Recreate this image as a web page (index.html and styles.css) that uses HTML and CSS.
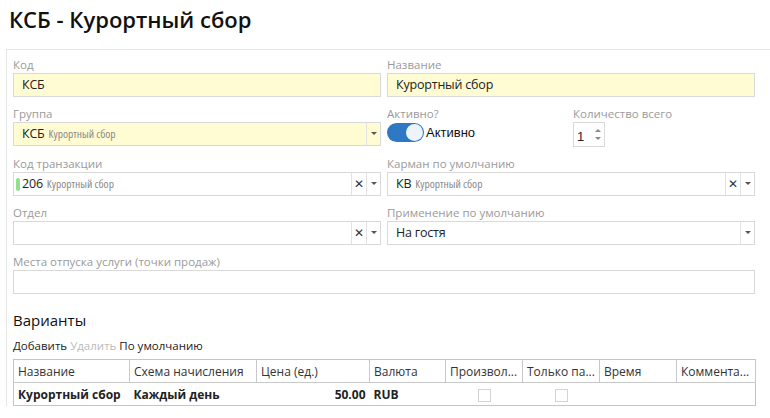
FILE: index.html
```html
<!DOCTYPE html>
<html lang="ru">
<head>
    <meta charset="UTF-8">
    <title>КСБ - Курортный сбор</title>
    <link rel="stylesheet" href="styles.css">
</head>
<body>
    <h1 class="page-title">КСБ - Курортный сбор</h1>
    <div class="panel">
        <div class="form">
            <div class="field">
                <label>Код</label>
                <div class="input required">КСБ</div>
            </div>
            <div class="field">
                <label>Название</label>
                <div class="input required">Курортный сбор</div>
            </div>

            <div class="field">
                <label>Группа</label>
                <div class="input select required">
                    <span class="value">КСБ <span class="hint">Курортный сбор</span></span>
                    <span class="arrow"></span>
                </div>
            </div>
            <div class="field split">
                <div class="sub">
                    <label>Активно?</label>
                    <div class="switch-row">
                        <span class="switch"><span class="knob"></span></span>
                        <span class="switch-text">Активно</span>
                    </div>
                </div>
                <div class="sub">
                    <label>Количество всего</label>
                    <div class="spinner">
                        <span>1</span>
                        <span class="spin-btns"><i class="up"></i><i class="down"></i></span>
                    </div>
                </div>
            </div>

            <div class="field">
                <label>Код транзакции</label>
                <div class="input select">
                    <span class="value"><span class="mark"></span>206 <span class="hint">Курортный сбор</span></span>
                    <span class="clear">&#x2715;</span>
                    <span class="arrow"></span>
                </div>
            </div>
            <div class="field">
                <label>Карман по умолчанию</label>
                <div class="input select">
                    <span class="value">КВ <span class="hint">Курортный сбор</span></span>
                    <span class="clear">&#x2715;</span>
                    <span class="arrow"></span>
                </div>
            </div>

            <div class="field">
                <label>Отдел</label>
                <div class="input select">
                    <span class="value"></span>
                    <span class="clear">&#x2715;</span>
                    <span class="arrow"></span>
                </div>
            </div>
            <div class="field">
                <label>Применение по умолчанию</label>
                <div class="input select">
                    <span class="value">На гостя</span>
                    <span class="arrow"></span>
                </div>
            </div>

            <div class="field wide">
                <label>Места отпуска услуги (точки продаж)</label>
                <div class="input"></div>
            </div>
        </div>

        <h2 class="section-title">Варианты</h2>
        <div class="toolbar">
            <span>Добавить</span>
            <span class="disabled">Удалить</span>
            <span>По умолчанию</span>
        </div>
        <table class="grid">
            <thead>
                <tr>
                    <th class="c1">Название</th>
                    <th class="c2">Схема начисления</th>
                    <th class="c3">Цена (ед.)</th>
                    <th class="c4">Валюта</th>
                    <th class="c5">Произвол...</th>
                    <th class="c6">Только па...</th>
                    <th class="c7">Время</th>
                    <th class="c8">Коммента...</th>
                </tr>
            </thead>
            <tbody>
                <tr>
                    <td>Курортный сбор</td>
                    <td>Каждый день</td>
                    <td class="num">50.00</td>
                    <td>RUB</td>
                    <td class="center"><span class="check"></span></td>
                    <td class="center"><span class="check"></span></td>
                    <td></td>
                    <td></td>
                </tr>
            </tbody>
        </table>
    </div>
</body>
</html>
```

FILE: styles.css
```css
* {
    box-sizing: border-box;
    margin: 0;
    padding: 0;
}
body {
    background: #fff;
    font-family: "Open Sans", Arial, sans-serif;
    color: #222;
    width: 770px;
    overflow: hidden;
}
.page-title {
    font-size: 22px;
    font-weight: 600;
    line-height: 30px;
    padding: 4px 0 0 9px;
    height: 49px;
    color: #111;
}
.panel {
    margin-left: 6px;
    border-left: 1px solid #e6e6e6;
    border-top: 1px solid #e6e6e6;
    padding: 6px 14px 0 6px;
}
.form {
    display: grid;
    grid-template-columns: 368px 368px;
    column-gap: 6px;
}
.field {
    margin-bottom: 8px;
}
.field.wide {
    grid-column: 1 / 3;
}
label {
    display: block;
    font-size: 11.5px;
    line-height: 17px;
    height: 17px;
    color: #9a9a9a;
    white-space: nowrap;
}
.input {
    height: 24px;
    border: 1px solid #d9d9d9;
    background: #fff;
    font-size: 12.5px;
    letter-spacing: -0.2px;
    line-height: 22px;
    padding-left: 8px;
    display: flex;
    align-items: center;
}
.input.required {
    background: #fffcd4;
}
.select {
    padding-left: 0;
}
.select .value {
    flex: 1;
    padding-left: 8px;
    white-space: nowrap;
    display: flex;
    align-items: center;
}
.hint {
    font-size: 11.5px;
    font-stretch: 82%;
    letter-spacing: 0;
    color: #8a8a8a;
    margin-left: 4px;
}
.mark {
    display: inline-block;
    width: 4px;
    height: 13px;
    border-radius: 2px;
    background: #92e08e;
    margin-left: -6px;
    margin-right: 2px;
}
.clear {
    width: 15px;
    height: 22px;
    border-left: 1px solid #e2e2e2;
    text-align: center;
    font-size: 12px;
    color: #333;
    line-height: 22px;
}
.arrow {
    width: 14px;
    height: 22px;
    border-left: 1px solid #e2e2e2;
    position: relative;
}
.arrow::after {
    content: "";
    position: absolute;
    left: 4px;
    top: 9px;
    border-left: 3px solid transparent;
    border-right: 3px solid transparent;
    border-top: 3px solid #555;
}
.split {
    display: flex;
}
.sub:first-child {
    width: 186px;
}
.switch-row {
    display: flex;
    align-items: center;
    height: 20px;
}
.switch {
    width: 37px;
    height: 19px;
    border-radius: 10px;
    background: #2f78c4;
    position: relative;
}
.knob {
    position: absolute;
    right: 1px;
    top: 1px;
    width: 17px;
    height: 17px;
    border-radius: 50%;
    background: #eef4fb;
}
.switch-text {
    font-family: "Liberation Sans", Arial, sans-serif;
    font-size: 13px;
    color: #111;
    margin-left: 2px;
}
.spinner {
    width: 32px;
    height: 25px;
    border: 1px solid #d9d9d9;
    display: flex;
    align-items: center;
    padding-left: 3px;
    font-size: 13px;
    font-family: "Liberation Sans", Arial, sans-serif;
}
.spinner span:first-child {
    flex: 1;
    padding-top: 4px;
}
.spin-btns {
    width: 12px;
    display: flex;
    flex-direction: column;
    align-items: center;
    gap: 5px;
}
.spin-btns i {
    display: block;
    border-left: 3px solid transparent;
    border-right: 3px solid transparent;
}
.spin-btns .up {
    border-bottom: 3px solid #888;
}
.spin-btns .down {
    border-top: 3px solid #888;
}
.section-title {
    font-size: 15px;
    font-weight: 400;
    color: #111;
    margin-top: 8px;
    line-height: 20px;
}
.toolbar {
    font-size: 11.5px;
    margin-top: 8px;
    line-height: 16px;
    height: 21px;
    color: #222;
}
.toolbar .disabled {
    color: #bbb;
}
.grid {
    width: 742px;
    border-collapse: collapse;
    border: 1px solid #c4c4c4;
    table-layout: fixed;
    font-size: 12px;
}
.grid th {
    font-weight: 400;
    text-align: left;
    height: 23px;
    padding: 0 4px;
    border-right: 1px solid #c8c8c8;
    border-bottom: 1px solid #c8c8c8;
    white-space: nowrap;
    overflow: hidden;
    color: #333;
}
.grid td {
    height: 23px;
    padding: 0 4px;
    font-weight: 700;
    white-space: nowrap;
}
.grid .num {
    text-align: right;
}
.grid .center {
    text-align: center;
}
.check {
    display: inline-block;
    width: 13px;
    height: 13px;
    border: 1px solid #d4d4d4;
    vertical-align: middle;
}
.c1 { width: 116px; }
.c2 { width: 127px; }
.c3 { width: 113px; }
.c4 { width: 76px; }
.c5 { width: 77px; }
.c6 { width: 77px; }
.c7 { width: 77px; }
.c8 { width: 79px; }
```
